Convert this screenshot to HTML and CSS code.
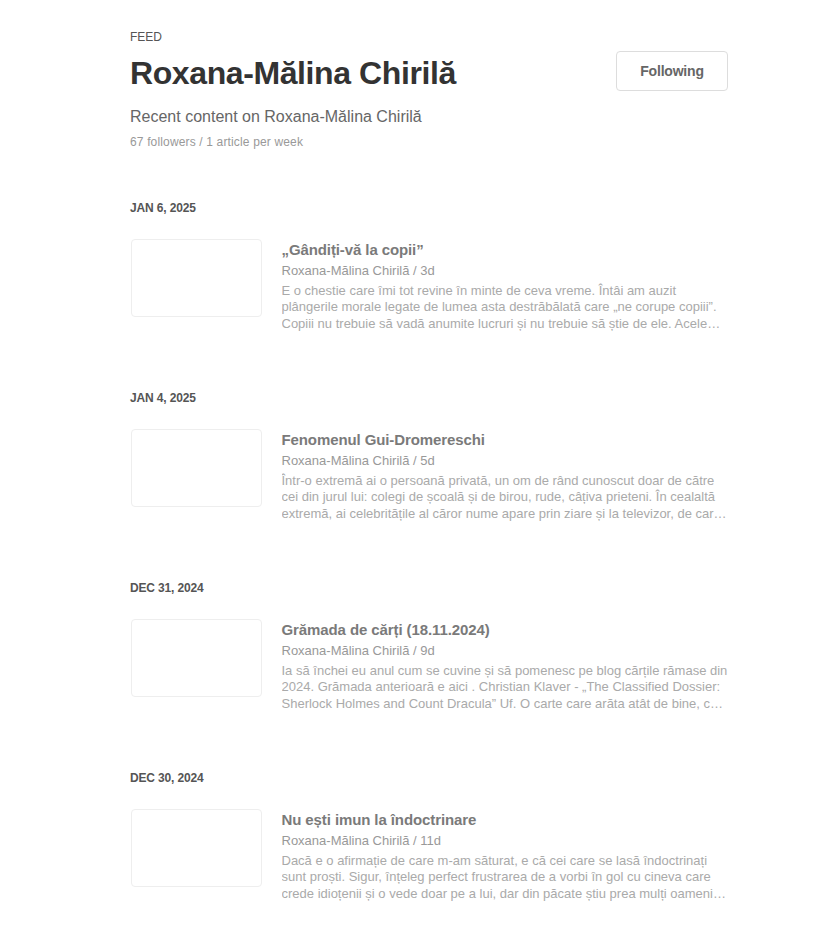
FILE: index.html
```html
<!DOCTYPE html>
<html lang="ro">
<head>
<meta charset="utf-8">
<title>Roxana-Mălina Chirilă</title>
<link rel="stylesheet" href="styles.css">
</head>
<body>
<main class="page">
  <div class="kicker">FEED</div>
  <header class="head">
    <h1 class="title">Roxana-Mălina Chirilă</h1>
    <button class="follow">Following</button>
  </header>
  <p class="subtitle">Recent content on Roxana-Mălina Chirilă</p>
  <p class="stats">67 followers / 1 article per week</p>

  <section class="day">
    <h2 class="date">JAN 6, 2025</h2>
    <article class="item">
      <div class="thumb"></div>
      <div class="body">
        <h3 class="item-title">„Gândiți-vă la copii”</h3>
        <div class="meta">Roxana-Mălina Chirilă / 3d</div>
        <p class="excerpt">E o chestie care îmi tot revine în minte de ceva vreme. Întâi am auzit plângerile morale legate de lumea asta destrăbălată care „ne corupe copiii”. Copiii nu trebuie să vadă anumite lucruri și nu trebuie să știe de ele. Acele lucruri sunt mult prea multe.</p>
      </div>
    </article>
  </section>

  <section class="day">
    <h2 class="date">JAN 4, 2025</h2>
    <article class="item">
      <div class="thumb"></div>
      <div class="body">
        <h3 class="item-title">Fenomenul Gui-Dromereschi</h3>
        <div class="meta">Roxana-Mălina Chirilă / 5d</div>
        <p class="excerpt">Într-o extremă ai o persoană privată, un om de rând cunoscut doar de către cei din jurul lui: colegi de școală și de birou, rude, câțiva prieteni. În cealaltă extremă, ai celebritățile al căror nume apare prin ziare și la televizor, de care toată lumea știe.</p>
      </div>
    </article>
  </section>

  <section class="day">
    <h2 class="date">DEC 31, 2024</h2>
    <article class="item">
      <div class="thumb"></div>
      <div class="body">
        <h3 class="item-title">Grămada de cărți (18.11.2024)</h3>
        <div class="meta">Roxana-Mălina Chirilă / 9d</div>
        <p class="excerpt">Ia să închei eu anul cum se cuvine și să pomenesc pe blog cărțile rămase din 2024. Grămada anterioară e aici . Christian Klaver - „The Classified Dossier: Sherlock Holmes and Count Dracula” Uf. O carte care arăta atât de bine, cu o copertă superbă.</p>
      </div>
    </article>
  </section>

  <section class="day">
    <h2 class="date">DEC 30, 2024</h2>
    <article class="item">
      <div class="thumb"></div>
      <div class="body">
        <h3 class="item-title">Nu ești imun la îndoctrinare</h3>
        <div class="meta">Roxana-Mălina Chirilă / 11d</div>
        <p class="excerpt">Dacă e o afirmație de care m-am săturat, e că cei care se lasă îndoctrinați sunt proști. Sigur, înțeleg perfect frustrarea de a vorbi în gol cu cineva care crede idioțenii și o vede doar pe a lui, dar din păcate știu prea mulți oameni deștepți care au căzut în plasă.</p>
      </div>
    </article>
  </section>
</main>
</body>
</html>
```

FILE: styles.css
```css
* { box-sizing: border-box; }

html, body {
  margin: 0;
  padding: 0;
  background: #fff;
}

body {
  font-family: "Liberation Sans", Arial, sans-serif;
  color: #333;
}

.page {
  width: 598px;
  margin-left: 130px;
  padding-top: 30px;
}

.kicker {
  font-size: 12px;
  line-height: 14px;
  color: #555;
}

.head {
  display: flex;
  justify-content: space-between;
  align-items: flex-start;
  margin-top: 7px;
}

.title {
  margin: 0;
  padding-top: 2px;
  font-size: 32px;
  line-height: 40px;
  font-weight: 700;
  letter-spacing: -0.4px;
  color: #333;
}

.follow {
  width: 112px;
  height: 40px;
  border: 1px solid #ddd;
  border-radius: 4px;
  background: #fff;
  font-family: "Liberation Sans", Arial, sans-serif;
  font-size: 14px;
  font-weight: 700;
  letter-spacing: -0.2px;
  color: #666;
  padding: 0;
}

.subtitle {
  margin: 14px 0 0;
  font-size: 16px;
  line-height: 20px;
  color: #666;
}

.stats {
  margin: 7px 0 0;
  font-size: 12px;
  line-height: 16px;
  letter-spacing: 0.15px;
  color: #999;
}

.day {
  margin-top: 50px;
}

.day + .day {
  margin-top: 58px;
}

.date {
  margin: 0;
  font-size: 12px;
  line-height: 16px;
  font-weight: 700;
  letter-spacing: -0.15px;
  color: #555;
}

.item {
  display: flex;
  gap: 20px;
  margin-top: 23px;
}

.thumb {
  flex: 0 0 131px;
  height: 78px;
  margin-left: 0.5px;
  border: 1px solid #eee;
  border-radius: 4px;
}

.body {
  flex: 1;
  min-width: 0;
}

.item-title {
  margin: 1px 0 0;
  font-size: 15px;
  line-height: 20px;
  font-weight: 700;
  letter-spacing: -0.1px;
  color: #7a7a7a;
}

.meta {
  margin-top: 3px;
  font-size: 13px;
  line-height: 16px;
  color: #999;
}

.excerpt {
  margin: 3.5px 0 0;
  font-size: 13px;
  line-height: 16.5px;
  color: #aaa;
  display: -webkit-box;
  -webkit-line-clamp: 3;
  -webkit-box-orient: vertical;
  overflow: hidden;
}
```
